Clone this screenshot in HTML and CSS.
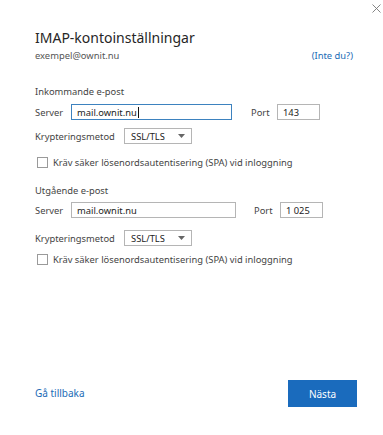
FILE: index.html
```html
<!DOCTYPE html>
<html lang="sv">
<head>
<meta charset="utf-8">
<title>IMAP-kontoinställningar</title>
<link rel="stylesheet" href="styles.css">
</head>
<body>
<div class="dialog">
  <div class="topbar">
    <button class="close" aria-label="Stäng">
      <svg width="9" height="9" viewBox="0 0 9 9"><path d="M0.5 0.5 L8.5 8.5 M8.5 0.5 L0.5 8.5" stroke="#777" stroke-width="0.9" fill="none"/></svg>
    </button>
  </div>
  <h1 class="title">IMAP-kontoinställningar</h1>
  <div class="account">
    <span class="email">exempel@ownit.nu</span>
    <a class="link" href="#">(Inte du?)</a>
  </div>

  <section class="group group-in">
    <div class="group-title">Inkommande e-post</div>
    <div class="row server-row">
      <span class="label server-label">Server</span>
      <div class="field server focus">mail.ownit.nu<span class="caret"></span></div>
      <span class="label port-label">Port</span>
      <div class="field port">143</div>
    </div>
    <div class="row select-row">
      <span class="label enc-label">Krypteringsmetod</span>
      <div class="select">SSL/TLS<svg class="arrow" width="7" height="4" viewBox="0 0 7 4"><path d="M0 0 H7 L3.5 4 Z" fill="#666"/></svg></div>
    </div>
    <div class="check"><span class="box"></span><span>Kräv säker lösenordsautentisering (SPA) vid inloggning</span></div>
  </section>

  <section class="group group-out">
    <div class="group-title">Utgående e-post</div>
    <div class="row server-row">
      <span class="label server-label">Server</span>
      <div class="field server wide">mail.ownit.nu</div>
      <span class="label port-label wide">Port</span>
      <div class="field port">1 025</div>
    </div>
    <div class="row select-row">
      <span class="label enc-label">Krypteringsmetod</span>
      <div class="select">SSL/TLS<svg class="arrow" width="7" height="4" viewBox="0 0 7 4"><path d="M0 0 H7 L3.5 4 Z" fill="#666"/></svg></div>
    </div>
    <div class="check"><span class="box"></span><span>Kräv säker lösenordsautentisering (SPA) vid inloggning</span></div>
  </section>

  <div class="footer">
    <a class="link back" href="#">Gå tillbaka</a>
    <button class="next">Nästa</button>
  </div>
</div>
</body>
</html>
```

FILE: styles.css
```css
* { box-sizing: border-box; }
html, body { margin: 0; padding: 0; background: #fff; }
body {
  font-family: "Noto Sans", "Open Sans", sans-serif;
  color: #444;
  width: 383px;
  height: 435px;
  overflow: hidden;
}
.dialog {
  height: 435px;
  display: flex;
  flex-direction: column;
  padding: 0 26px 28px 35px;
}
.topbar {
  display: flex;
  justify-content: flex-end;
  height: 18px;
  margin-right: -24px;
  padding-top: 4px;
}
.close {
  border: 0;
  background: none;
  padding: 0;
  width: 9px;
  height: 9px;
  display: block;
}
.close svg { display: block; }
.title {
  margin: 10px 0 0 0;
  font-size: 14px;
  line-height: 20px;
  font-weight: 400;
  color: #262626;
}
.account {
  display: flex;
  justify-content: space-between;
  font-size: 9.4px;
  line-height: 14px;
  margin-top: 1px;
}
.email { color: #555; }
.link { color: #1b6bb6; text-decoration: none; }
.account .link { margin-right: 4px; }

.group { display: flex; flex-direction: column; font-size: 9.35px; }
.group-in { margin-top: 22px; }
.group-out { margin-top: 15px; }
.group-title { line-height: 14px; color: #444; }
.row { display: flex; align-items: center; }
.server-row { margin-top: 5px; height: 16px; }
.group-out .server-row { margin-top: 4px; }
.label { color: #444; }
.server-label { width: 36px; }
.field {
  height: 16px;
  border: 1px solid #b5b5b5;
  padding: 0 5px;
  display: flex;
  align-items: center;
  color: #222;
}
.field.server { width: 161px; }
.field.server.wide { width: 165px; }
.field.focus { border-color: #3d82bf; }
.caret { display: inline-block; width: 1px; height: 11px; background: #111; margin-left: 1px; }
.port-label { margin-left: 19px; width: 26px; }
.port-label.wide { margin-left: 18px; }
.field.port { width: 43px; }
.select-row { margin-top: 8px; }
.group-out .select-row { margin-top: 12px; }
.enc-label { width: 89px; }
.select {
  width: 68px;
  height: 16px;
  border: 1px solid #b5b5b5;
  padding: 0 6px 0 6px;
  display: flex;
  align-items: center;
  justify-content: space-between;
  color: #222;
}
.arrow { display: block; }
.check {
  display: flex;
  align-items: center;
  margin-top: 12px;
  color: #444;
}
.group-out .check { margin-top: 7px; }
.box {
  width: 11px;
  height: 11px;
  border: 1px solid #9a9a9a;
  margin: 0 5px 0 2px;
  background: #fff;
}
.footer {
  margin-top: auto;
  display: flex;
  justify-content: space-between;
  align-items: center;
}
.back { font-size: 10px; margin-top: -1px; }
.next {
  width: 69px;
  height: 27px;
  border: 0;
  background: #1a6bbd;
  color: #fff;
  font-family: "Noto Sans", "Open Sans", sans-serif;
  font-size: 10px;
  padding: 0;
}
```
